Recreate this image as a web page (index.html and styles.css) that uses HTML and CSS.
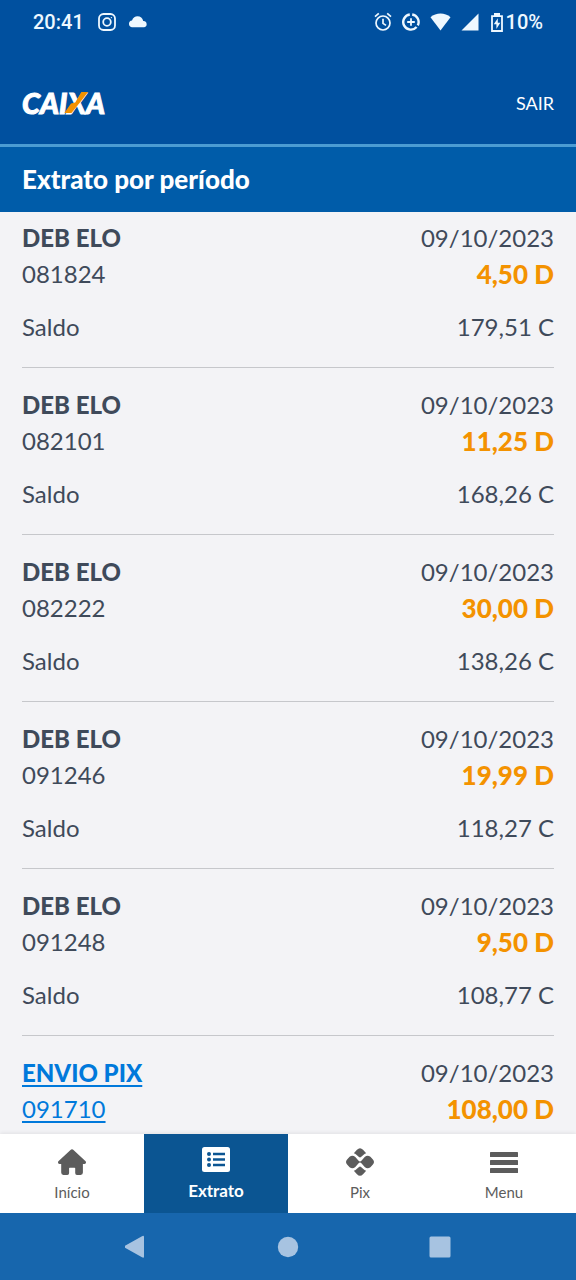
FILE: index.html
```html
<!DOCTYPE html>
<html lang="pt-BR">
<head>
<meta charset="utf-8">
<meta name="viewport" content="width=device-width, initial-scale=1">
<title>Extrato por período</title>
<link rel="stylesheet" href="styles.css">
</head>
<body>
<div class="app">
  <div class="status">
    <div class="status-group">
      <span class="clock">20:41</span>
      <svg viewBox="0 0 18 18" width="18" height="18" fill="none" stroke="currentColor" stroke-width="1.8"><rect x="1" y="1" width="16" height="16" rx="4.5"/><circle cx="9" cy="9" r="3.8"/><circle cx="13.4" cy="4.6" r=".7" fill="currentColor" stroke="none"/></svg>
      <svg viewBox="0 0 20 12" width="20" height="12" fill="currentColor"><path d="M3.800 11.300A3.500 3.500 0 0 1 4 4.400C5 1.500 7.300.3 9.400.3 12.500.3 14.600 2.300 15.200 5A3.200 3.200 0 0 1 16.200 11.300Z"/></svg>
    </div>
    <div class="status-group status-right">
      <svg viewBox="0 0 18 20" width="18" height="20" fill="none" stroke="currentColor" stroke-width="1.7"><circle cx="9" cy="11" r="7"/><path d="M9 6.8V11.4L12 13.4M1 4.6 4.8 1.4M17 4.6 13.2 1.4"/></svg>
      <svg viewBox="0 0 18 18" width="18" height="18" fill="none" stroke="currentColor"><path stroke-width="2.4" d="M10.2 1.5A7.6 7.6 0 0 1 15.8 12.4M14.6 14A7.6 7.6 0 1 1 7.8 1.5"/><path stroke-width="1.8" d="M9 5.2v7.6M5.2 9h7.6"/></svg>
      <svg viewBox="0 0 21 18" width="21" height="18" fill="currentColor"><path d="M.5 4.2C6-.6 15-.6 20.5 4.2L10.5 17.4Z"/></svg>
      <svg viewBox="0 0 18 18" width="18" height="18" fill="currentColor"><path d="M17.500 .5V17.500H.5Z"/></svg>
      <span class="battery"><svg viewBox="0 0 12 19" width="12" height="19" fill="none" stroke="currentColor"><path stroke-width="1.8" d="M1 3.200H11V18H1Z"/><path fill="currentColor" stroke="none" d="M3 0h6v3H3zM6.800 5.200 2.800 11.200H5.400V16L9.300 9.800H6.800Z"/></svg>10%</span>
    </div>
  </div>
  <header class="brandbar">
    <span class="logo">CAI<span class="logo-x">X</span>A</span>
    <button class="exit" type="button">SAIR</button>
  </header>
  <h1 class="title">Extrato por período</h1>
  <main class="list">
    <article class="entry">
      <div class="row"><strong>DEB ELO</strong><time datetime="2023-10-09">09/10/2023</time></div>
      <div class="row"><span>081824</span><strong class="debit">4,50 D</strong></div>
      <div class="row balance"><span>Saldo</span><span>179,51 C</span></div>
    </article>
    <article class="entry">
      <div class="row"><strong>DEB ELO</strong><time datetime="2023-10-09">09/10/2023</time></div>
      <div class="row"><span>082101</span><strong class="debit">11,25 D</strong></div>
      <div class="row balance"><span>Saldo</span><span>168,26 C</span></div>
    </article>
    <article class="entry">
      <div class="row"><strong>DEB ELO</strong><time datetime="2023-10-09">09/10/2023</time></div>
      <div class="row"><span>082222</span><strong class="debit">30,00 D</strong></div>
      <div class="row balance"><span>Saldo</span><span>138,26 C</span></div>
    </article>
    <article class="entry">
      <div class="row"><strong>DEB ELO</strong><time datetime="2023-10-09">09/10/2023</time></div>
      <div class="row"><span>091246</span><strong class="debit">19,99 D</strong></div>
      <div class="row balance"><span>Saldo</span><span>118,27 C</span></div>
    </article>
    <article class="entry">
      <div class="row"><strong>DEB ELO</strong><time datetime="2023-10-09">09/10/2023</time></div>
      <div class="row"><span>091248</span><strong class="debit">9,50 D</strong></div>
      <div class="row balance"><span>Saldo</span><span>108,77 C</span></div>
    </article>
    <article class="entry">
      <div class="row"><a class="link" href="#pix"><strong>ENVIO PIX</strong></a><time datetime="2023-10-09">09/10/2023</time></div>
      <div class="row"><a class="link" href="#pix">091710</a><strong class="debit">108,00 D</strong></div>
    </article>
  </main>
  <nav class="tabs">
    <a class="tab" href="#inicio">
      <svg viewBox="0 0 28 28" width="28" height="28" fill="currentColor"><path d="M14 1.200Q14.800 1.200 15.500 1.900L27.600 13.300Q28.200 14 27.900 15 27.500 15.900 26.400 15.900H24.900V24.600Q24.900 26.900 22.600 26.900H19Q17.200 26.900 17.200 25V20.200Q17.200 19.700 16.600 19.700H11.700Q11.100 19.700 11.100 20.200V25Q11.100 26.900 9.300 26.900H5.400Q3.200 26.900 3.200 24.600V15.900H1.600Q.5 15.900 .1 15-.2 14 .4 13.300L12.500 1.900Q13.200 1.200 14 1.200Z"/></svg>
      <span>Início</span>
    </a>
    <a class="tab active" href="#extrato" aria-current="page">
      <svg viewBox="0 0 28 28" width="28" height="28"><rect y="1" width="28" height="25" rx="2.5" fill="currentColor"/><path d="M11 8h12M11 13.500h12M11 19h12" stroke="#0b5592" stroke-width="2.6"/><g fill="#0b5592"><circle cx="7" cy="8" r="2"/><circle cx="7" cy="13.5" r="2"/><circle cx="7" cy="19" r="2"/></g></svg>
      <span>Extrato</span>
    </a>
    <a class="tab" href="#pix">
      <svg viewBox="0 0 28 28" width="28" height="28" fill="currentColor"><path d="M7.800 5.200 11 1.800Q14-1.400 17 1.800L20.200 5.200Q18.800 5.600 17.600 6.700L15 9.100Q14 9.900 13 9.100L10.400 6.700Q9.200 5.600 7.800 5.200Z"/><path d="M7.800 22.800 11 26.200Q14 29.400 17 26.200L20.200 22.800Q18.800 22.400 17.600 21.300L15 18.900Q14 18.100 13 18.900L10.400 21.300Q9.200 22.400 7.800 22.800Z"/><path d="M3.600 8.700Q6.600 6.500 9.300 9L12.600 12.700Q13.200 13.400 14 13.400 14.800 13.400 15.400 12.700L18.700 9Q21.400 6.500 24.400 8.700L26.900 11.400Q29.100 14 26.900 16.600L24.400 19.300Q21.400 21.500 18.700 19L15.400 15.300Q14.800 14.600 14 14.600 13.200 14.600 12.600 15.300L9.300 19Q6.600 21.500 3.600 19.300L1.100 16.600Q-1.100 14 1.100 11.400Z"/></svg>
      <span>Pix</span>
    </a>
    <a class="tab" href="#menu">
      <svg viewBox="0 0 28 28" width="28" height="28" fill="currentColor"><rect y="4" width="28" height="5" rx=".6"/><rect y="12" width="28" height="5" rx=".6"/><rect y="20" width="28" height="5" rx=".6"/></svg>
      <span>Menu</span>
    </a>
  </nav>
  <div class="system">
    <button type="button" aria-label="Voltar"><svg viewBox="0 0 22 24" width="22" height="24" fill="currentColor"><path d="M17 1.200Q19 0 19 2V21.500Q19 23.500 17 22.300L0 12.700Q-1.500 11.700 0 10.800Z"/></svg></button>
    <button type="button" aria-label="Tela inicial"><svg viewBox="0 0 22 22" width="22" height="22" fill="currentColor"><circle cx="11" cy="11" r="10.2"/></svg></button>
    <button type="button" aria-label="Recentes"><svg viewBox="0 0 22 22" width="22" height="22" fill="currentColor"><rect x=".5" y=".5" width="21" height="21" rx="1.5"/></svg></button>
  </div>
</div>
</body>
</html>
```
FILE: styles.css
```css
* { box-sizing: border-box; }
body {
  margin: 0;
  font-family: Lato, "Open Sans", sans-serif;
  color: #3f4a5a;
  background: #f3f3f6;
}
button { border: 0; padding: 0; background: none; color: inherit; font: inherit; }
svg { display: block; }
.app { display: flex; flex-direction: column; height: 100vh; }
.status {
  display: flex;
  justify-content: space-between;
  align-items: center;
  height: 44px;
  padding: 0 33px;
  background: #00509f;
  color: #eef8ff;
  font: 500 20px/24px Roboto, sans-serif;
}
.status-group { display: flex; align-items: center; gap: 12px; }
.status-right { gap: 10px; }
.clock { margin-right: 2px; }
.battery { display: flex; align-items: center; gap: 3px; margin-left: 2px; }
.brandbar {
  display: flex;
  justify-content: space-between;
  align-items: center;
  height: 103px;
  padding: 18px 22px 0;
  border-bottom: 3px solid #4b9cd3;
  background: #00509f;
  color: #fff;
}
.logo {
  font-size: 29px;
  line-height: 32px;
  font-weight: 900;
  font-style: italic;
  -webkit-text-stroke: 1px currentColor;
}
.logo-x { position: relative; }
.logo-x::after {
  content: "";
  position: absolute;
  inset: 7px -2px 7px -3px;
  background: #f39200;
  clip-path: polygon(72% 0, 100% 0, 66% 50%, 30% 100%, 0 100%, 28% 55%, 46% 50%);
}
.exit { font-size: 18px; line-height: 24px; }
.title {
  margin: 0;
  padding: 16px 22px 17px;
  background: #005ca9;
  color: #fff;
  font-size: 26px;
  line-height: 32px;
  font-weight: 900;
}
.list { flex: 1; min-height: 0; padding: 0 22px; overflow-y: auto; scrollbar-width: none; }
.entry {
  padding: 19px 0 22px;
  border-bottom: 1px solid #c6c7cb;
  font-size: 24px;
  line-height: 36px;
}
.entry:first-child { padding-top: 8px; }
.row { display: flex; justify-content: space-between; }
.row strong { font-weight: 900; }
.balance { margin-top: 17px; }
.row .debit { color: #f39200; font-size: 26px; }
.link { color: #0079db; text-underline-offset: 3px; text-decoration-thickness: 2px; }
.tabs {
  display: grid;
  grid-template-columns: repeat(4, 1fr);
  background: #fff;
  box-shadow: 0 -1px 4px rgba(0, 0, 0, .08);
}
.tab {
  display: flex;
  flex-direction: column;
  align-items: center;
  gap: 6px;
  padding: 14px 0 11px;
  color: #5c5c5c;
  font-size: 15px;
  line-height: 20px;
  text-decoration: none;
}
.active {
  padding: 12px 0 12px;
  gap: 7px;
  background: #0b5592;
  color: #fff;
  font-size: 17px;
  font-weight: 700;
}
.system {
  display: flex;
  justify-content: center;
  gap: 130px;
  padding: 22px 0;
  background: #1766ad;
  color: #a7c3e1;
}
.system button { display: grid; place-items: center; width: 22px; height: 23px; }
```
